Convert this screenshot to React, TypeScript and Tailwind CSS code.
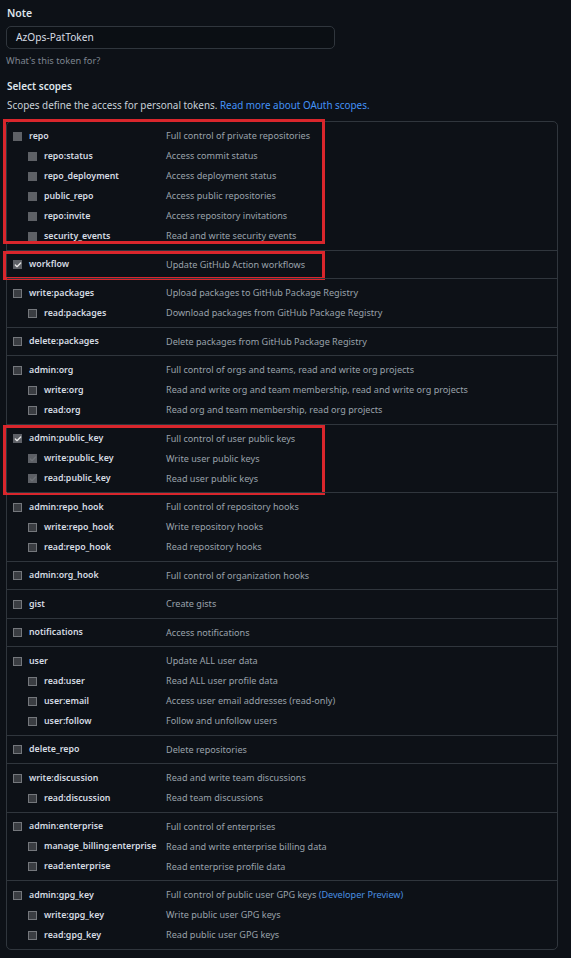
import { Check } from 'lucide-react';

type Scope = { name: string; desc: string; link?: string };
type Group = { parent: Scope; children?: Scope[]; checked?: boolean; style?: 'filled' | 'plain'; mark?: 'box' | 'row' | 'short' };

const groups: Group[] = [
  {
    parent: { name: 'repo', desc: 'Full control of private repositories' },
    children: [
      { name: 'repo:status', desc: 'Access commit status' },
      { name: 'repo_deployment', desc: 'Access deployment status' },
      { name: 'public_repo', desc: 'Access public repositories' },
      { name: 'repo:invite', desc: 'Access repository invitations' },
      { name: 'security_events', desc: 'Read and write security events' },
    ],
    style: 'filled',
    mark: 'box',
  },
  { parent: { name: 'workflow', desc: 'Update GitHub Action workflows' }, checked: true, mark: 'row' },
  {
    parent: { name: 'write:packages', desc: 'Upload packages to GitHub Package Registry' },
    children: [{ name: 'read:packages', desc: 'Download packages from GitHub Package Registry' }],
  },
  { parent: { name: 'delete:packages', desc: 'Delete packages from GitHub Package Registry' } },
  {
    parent: { name: 'admin:org', desc: 'Full control of orgs and teams, read and write org projects' },
    children: [
      { name: 'write:org', desc: 'Read and write org and team membership, read and write org projects' },
      { name: 'read:org', desc: 'Read org and team membership, read org projects' },
    ],
  },
  {
    parent: { name: 'admin:public_key', desc: 'Full control of user public keys' },
    children: [
      { name: 'write:public_key', desc: 'Write user public keys' },
      { name: 'read:public_key', desc: 'Read user public keys' },
    ],
    checked: true,
    mark: 'short',
  },
  {
    parent: { name: 'admin:repo_hook', desc: 'Full control of repository hooks' },
    children: [
      { name: 'write:repo_hook', desc: 'Write repository hooks' },
      { name: 'read:repo_hook', desc: 'Read repository hooks' },
    ],
  },
  { parent: { name: 'admin:org_hook', desc: 'Full control of organization hooks' } },
  { parent: { name: 'gist', desc: 'Create gists' } },
  { parent: { name: 'notifications', desc: 'Access notifications' } },
  {
    parent: { name: 'user', desc: 'Update ALL user data' },
    children: [
      { name: 'read:user', desc: 'Read ALL user profile data' },
      { name: 'user:email', desc: 'Access user email addresses (read-only)' },
      { name: 'user:follow', desc: 'Follow and unfollow users' },
    ],
  },
  { parent: { name: 'delete_repo', desc: 'Delete repositories' } },
  {
    parent: { name: 'write:discussion', desc: 'Read and write team discussions' },
    children: [{ name: 'read:discussion', desc: 'Read team discussions' }],
  },
  {
    parent: { name: 'admin:enterprise', desc: 'Full control of enterprises' },
    children: [
      { name: 'manage_billing:enterprise', desc: 'Read and write enterprise billing data' },
      { name: 'read:enterprise', desc: 'Read enterprise profile data' },
    ],
  },
  {
    parent: { name: 'admin:gpg_key', desc: 'Full control of public user GPG keys', link: '(Developer Preview)' },
    children: [
      { name: 'write:gpg_key', desc: 'Write public user GPG keys' },
      { name: 'read:gpg_key', desc: 'Read public user GPG keys' },
    ],
  },
];

function Box({ kind }: { kind: 'plain' | 'filled' | 'checked' | 'faint' }) {
  if (kind === 'checked' || kind === 'faint') {
    return (
      <div className="flex h-[9px] w-[9px] shrink-0 items-center justify-center bg-[#5d6066]">
        <Check className={kind === 'checked' ? 'h-[8px] w-[8px] text-[#e6e6e6]' : 'h-[8px] w-[8px] text-[#6f7277]'} strokeWidth={4} />
      </div>
    );
  }
  if (kind === 'filled') return <div className="h-[9px] w-[9px] shrink-0 bg-[#5e6166]" />;
  return <div className="h-[9px] w-[9px] shrink-0 border border-[#74777c] bg-[#3a3d42]" />;
}

function Row({ scope, child, kind }: { scope: Scope; child?: boolean; kind: 'plain' | 'filled' | 'checked' | 'faint' }) {
  return (
    <div className="flex h-5 items-center">
      <div className={`flex w-[159px] shrink-0 items-center ${child ? 'pl-[21px]' : 'pl-[6px]'}`}>
        <Box kind={kind} />
        <span className="ml-[7px] pt-px whitespace-nowrap text-[8.8px] font-semibold text-[#d6dce3]">{scope.name}</span>
      </div>
      <div className="whitespace-nowrap text-[9.1px] text-[#9aa2ab]">
        {scope.desc}
        {scope.link && <span className="text-[#4a90e2]"> {scope.link}</span>}
      </div>
    </div>
  );
}

export default function App() {
  return (
    <div className="min-h-[958px] bg-[#0d1117] pl-[6px] pt-[5px] font-['Noto_Sans',sans-serif]">
      <div className="w-[552px]">
        {/* Note */}
        <div className="pl-px text-[10.5px] leading-4 font-semibold text-[#dfe5ec]">Note</div>
        <div className="mt-[5px] flex h-[23px] w-[329px] items-center rounded-[5px] border border-[#30363d] bg-[#0b0f14] pl-[9px] text-[10.2px] text-[#d6dce3]">
          AzOps-PatToken
        </div>
        <div className="mt-[5px] text-[9.3px] leading-[14px] text-[#7d8590]">What's this token for?</div>

        {/* Scopes */}
        <div className="mt-[10px] pl-px text-[10px] leading-4 font-semibold text-[#dfe5ec]">Select scopes</div>
        <div className="mt-[4px] pl-px text-[9.9px] leading-[14px] text-[#c9d1d9]">
          Scopes define the access for personal tokens. <span className="text-[#4493f8]">Read more about OAuth scopes.</span>
        </div>

        <div className="mt-[9px] rounded-[5px] border border-[#30363d]">
          {groups.map((g, i) => {
            const parentKind = g.checked ? 'checked' : g.style === 'filled' ? 'filled' : 'plain';
            const childKind = g.checked ? 'faint' : g.style === 'filled' ? 'filled' : 'plain';
            return (
              <div key={g.parent.name} className={`relative pt-1 pb-[3.5px] ${i > 0 ? 'border-t border-[#30363d]' : ''}`}>
                <Row scope={g.parent} kind={parentKind} />
                {g.children?.map((c) => (
                  <Row key={c.name} scope={c} child kind={childKind} />
                ))}
                {g.mark === 'box' && (
                  <div className="pointer-events-none absolute top-[-3px] left-[-4px] h-[125px] w-[322px] border-[3px] border-[#d9262c]" />
                )}
                {g.mark === 'row' && (
                  <div className="pointer-events-none absolute top-0 left-[-4px] h-[29px] w-[322px] border-[3px] border-[#d9262c]" />
                )}
                {g.mark === 'short' && (
                  <div className="pointer-events-none absolute top-0 left-[-4px] h-[70px] w-[322px] border-[3px] border-[#d9262c]" />
                )}
              </div>
            );
          })}
        </div>
      </div>
    </div>
  );
}
